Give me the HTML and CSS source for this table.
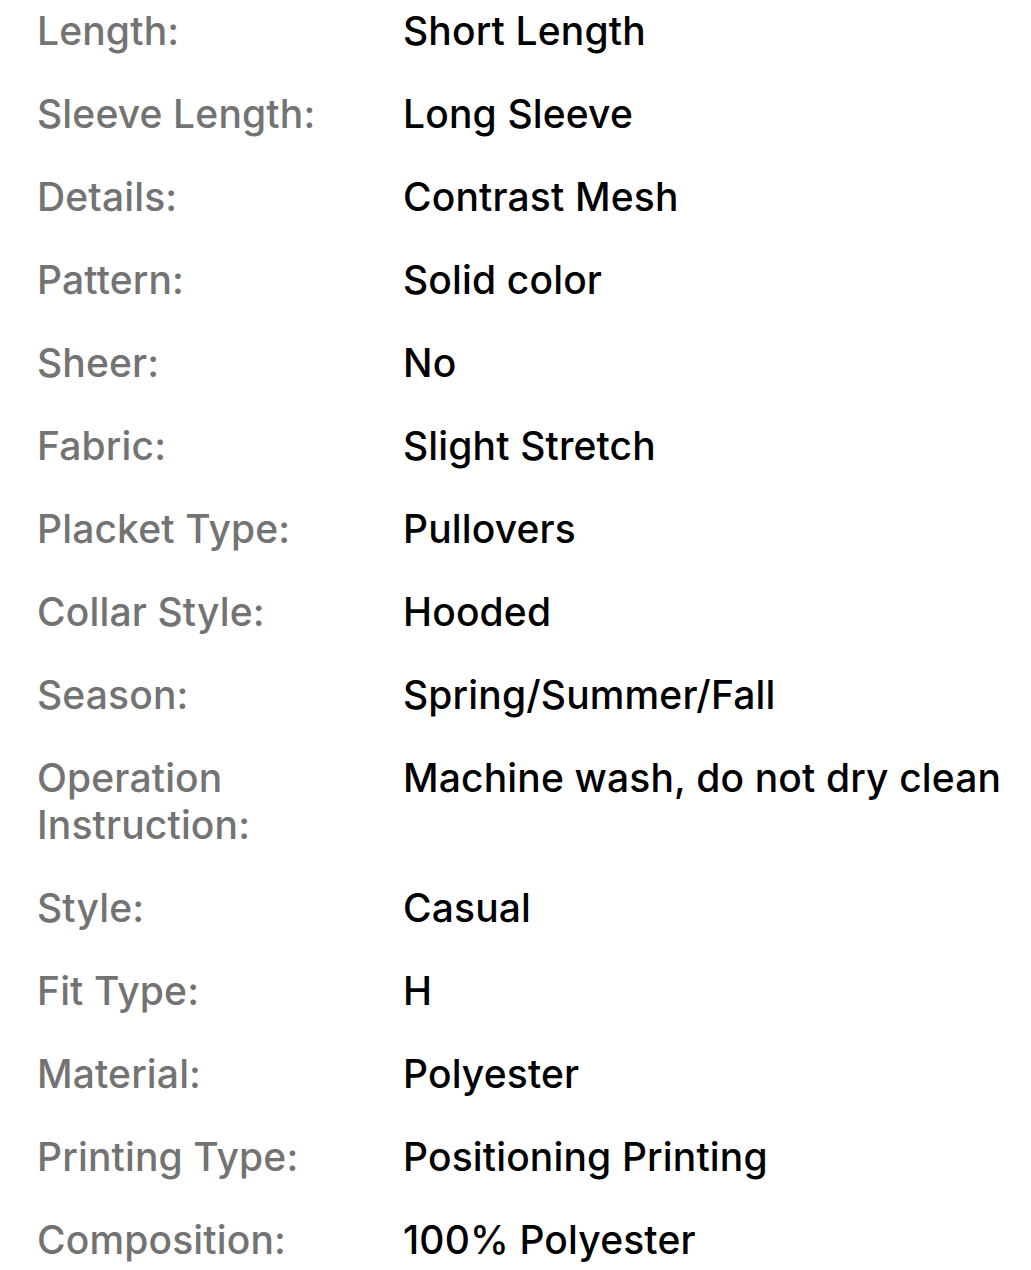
FILE: index.html
```html
<!DOCTYPE html>
<html lang="en">
<head>
<meta charset="utf-8">
<title>Product details</title>
<link rel="stylesheet" href="styles.css">
</head>
<body>
<dl class="specs">
  <dt>Length:</dt><dd>Short Length</dd>
  <dt>Sleeve Length:</dt><dd>Long Sleeve</dd>
  <dt>Details:</dt><dd>Contrast Mesh</dd>
  <dt>Pattern:</dt><dd>Solid color</dd>
  <dt>Sheer:</dt><dd>No</dd>
  <dt>Fabric:</dt><dd>Slight Stretch</dd>
  <dt>Placket Type:</dt><dd>Pullovers</dd>
  <dt>Collar Style:</dt><dd>Hooded</dd>
  <dt>Season:</dt><dd>Spring/Summer/Fall</dd>
  <dt>Operation Instruction:</dt><dd>Machine wash, do not dry clean</dd>
  <dt>Style:</dt><dd>Casual</dd>
  <dt>Fit Type:</dt><dd>H</dd>
  <dt>Material:</dt><dd>Polyester</dd>
  <dt>Printing Type:</dt><dd>Positioning Printing</dd>
  <dt>Composition:</dt><dd>100% Polyester</dd>
</dl>
</body>
</html>
```
FILE: styles.css
```css
html, body {
  margin: 0;
  padding: 0;
  background: #ffffff;
}
body {
  font-family: Inter, "Noto Sans", "Liberation Sans", sans-serif;
  font-weight: 500;
  font-size: 39px;
  line-height: 47px;
  letter-spacing: 0.15px;
  padding: 7px 0 0 37px;
}
.specs {
  margin: 0;
  display: grid;
  grid-template-columns: 366px 1fr;
  row-gap: 36px;
}
.specs dt {
  color: #737373;
  padding-right: 30px;
}
.specs dd {
  margin: 0;
  color: #000000;
  white-space: nowrap;
}
```
